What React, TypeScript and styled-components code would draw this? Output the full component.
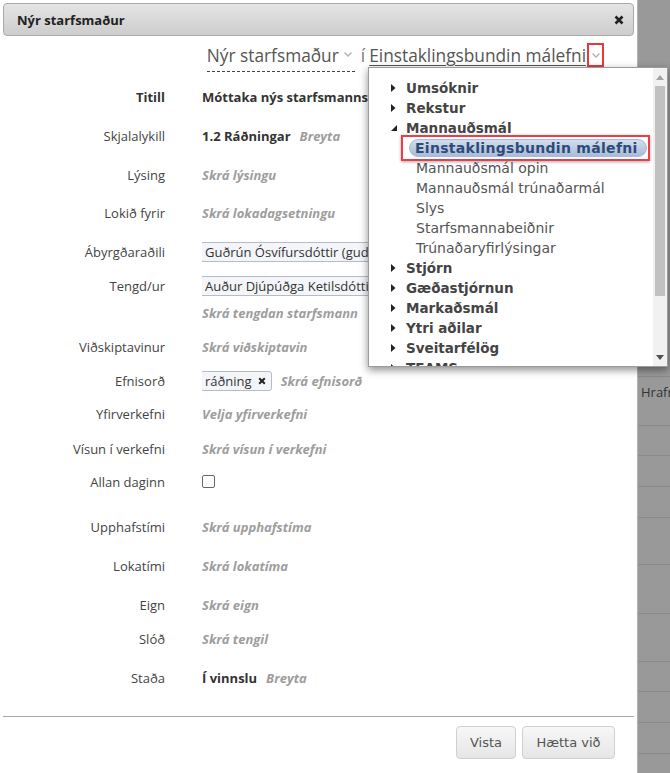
import React from 'react';
import styled, { createGlobalStyle } from 'styled-components';

const GlobalStyle = createGlobalStyle`
  html, body { margin: 0; padding: 0; }
  body {
    font-family: "Open Sans", "Liberation Sans", sans-serif;
    background: #999;
    overflow: hidden;
  }
`;

const Page = styled.div`
  position: relative;
  display: flex;
  height: 773px;
  width: 670px;
  overflow: hidden;
`;

const Dialog = styled.div`
  width: 637px;
  height: 100%;
  background: #fff;
  border-right: 1px solid #b4b4b4;
  display: flex;
  flex-direction: column;
`;

const TitleBar = styled.div`
  margin: 3px 3px 0;
  height: 31px;
  border: 1px solid #aaa;
  border-radius: 4px;
  background: linear-gradient(#e4e4e4, #cdcdcd);
  display: flex;
  align-items: center;
  justify-content: space-between;
  padding: 0 9px 0 13px;
  font-size: 13px;
  font-weight: 700;
  color: #222;
`;

const Crumbs = styled.div`
  height: 40px;
  display: flex;
  align-items: flex-start;
  justify-content: flex-end;
  padding: 8px 33px 0 0;
  box-sizing: border-box;
  font-size: 17.3px;
  color: #555;
  line-height: 24px;
`;

const CrumbPart = styled.span<{ $underline?: boolean }>`
  display: inline-flex;
  align-items: center;
  border-bottom: 1px dashed #444;
  padding-bottom: 3px;
  text-decoration: ${p => (p.$underline ? 'underline' : 'none')};
  text-underline-offset: 3px;
  text-decoration-thickness: 1px;
`;

const CrumbSep = styled.span`
  padding: 0 4px 0 6px;
  color: #777;
`;

const Chevron = styled.span<{ $boxed?: boolean }>`
  display: inline-flex;
  align-items: center;
  justify-content: center;
  width: ${p => (p.$boxed ? '17px' : '14px')};
  height: ${p => (p.$boxed ? '24px' : 'auto')};
  box-sizing: border-box;
  border: ${p => (p.$boxed ? '2px solid #e8383d' : 'none')};
  margin-left: ${p => (p.$boxed ? '1px' : '2px')};
  margin-top: ${p => (p.$boxed ? '-1px' : '0')};
  align-self: ${p => (p.$boxed ? 'auto' : 'flex-start')};
  padding-top: ${p => (p.$boxed ? '0' : '8px')};
`;

const Form = styled.div`
  flex: 1;
  padding-top: 11px;
  font-size: 13px;
  line-height: 20px;
`;

const Row = styled.div<{ $h: number }>`
  display: grid;
  grid-template-columns: 165px 1fr;
  column-gap: 37px;
  height: ${p => p.$h}px;
  white-space: nowrap;
`;

const Label = styled.div`
  text-align: right;
  color: #444;
`;

const Value = styled.div`
  display: flex;
  flex-direction: column;
  gap: 7px;
  overflow: hidden;
`;

const Line = styled.div`
  display: flex;
  align-items: center;
  gap: 9px;
`;

const Strong = styled.span`
  font-weight: 700;
  color: #333;
`;

const Hint = styled.span`
  font-weight: 700;
  font-style: italic;
  color: #9d9d9d;
`;

const Tag = styled.span`
  display: inline-flex;
  align-items: center;
  gap: 6px;
  height: 20px;
  box-sizing: border-box;
  padding: 0 5px 0 4px;
  margin-left: -2px;
  border: 1px solid #b4bccb;
  border-radius: 3px;
  background: #f3f5f9;
  color: #333;
  line-height: 18px;
`;

const Check = styled.span`
  display: inline-block;
  width: 11px;
  height: 11px;
  margin-top: 3px;
  border: 1px solid #666;
  border-radius: 2px;
  background: #fff;
`;

const Footer = styled.div`
  margin: 0 3px;
  border-top: 1px solid #a9a9a9;
  padding: 9px 19px 14px;
  display: flex;
  justify-content: flex-end;
  gap: 6px;
`;

const Button = styled.button<{ $w: number }>`
  width: ${p => p.$w}px;
  height: 33px;
  border: 1px solid #cfcfcf;
  border-radius: 4px;
  background: linear-gradient(#f7f7f7, #e6e6e6);
  font-family: "DejaVu Sans", Verdana, sans-serif;
  font-size: 13px;
  color: #555;
  padding: 0;
`;

const Backdrop = styled.div`
  flex: 1;
  display: flex;
  flex-direction: column;
  overflow: hidden;
  background: #999;
`;

const BackdropTop = styled.div`
  height: 379px;
`;

const BackRow = styled.div<{ $h: number }>`
  height: ${p => p.$h}px;
  border-top: 1px solid #8a8a8a;
  box-sizing: border-box;
  padding: 6px 0 0 3px;
  font-size: 13px;
  color: #333;
  white-space: nowrap;
`;

const Menu = styled.div`
  position: absolute;
  left: 368px;
  top: 67px;
  width: 300px;
  height: 300px;
  box-sizing: border-box;
  background: #fff;
  border: 1px solid #9c9c9c;
  box-shadow: 0 3px 8px rgba(0, 0, 0, 0.45);
  display: flex;
  overflow: hidden;
`;

const Tree = styled.div`
  flex: 1;
  padding-top: 10px;
  font-family: "DejaVu Sans", Verdana, sans-serif;
  font-size: 14px;
  line-height: 20px;
  white-space: nowrap;
  overflow: hidden;
`;

const Node = styled.div<{ $child?: boolean }>`
  display: flex;
  align-items: center;
  height: 20px;
  padding-left: ${p => (p.$child ? '47px' : '22px')};
  font-size: ${p => (p.$child ? '14px' : '13.5px')};
  font-weight: ${p => (p.$child ? 400 : 700)};
  color: ${p => (p.$child ? '#555' : '#444')};
`;

const Toggle = styled.span`
  display: inline-flex;
  width: 15px;
  align-items: center;
`;

const Picked = styled.div`
  display: flex;
  align-items: center;
  height: 22px;
  margin: -3px 3px -3px 32px;
  border: 2px solid #e8404a;
  box-shadow: 0 1px 3px rgba(0, 0, 0, 0.35);
  padding: 0 1px 0 6px;
  position: relative;
`;

const Pill = styled.span`
  flex: 1;
  height: 16px;
  line-height: 16px;
  border-radius: 9px;
  padding-left: 5px;
  background: linear-gradient(#d3ddec, #a9bcd9);
  border: 1px solid #a9bad4;
  font-weight: 700;
  letter-spacing: 0.3px;
  color: #2d4b7a;
  overflow: hidden;
`;

const Scrollbar = styled.div`
  width: 14px;
  background: #f1f1f1;
  display: flex;
  flex-direction: column;
  align-items: center;
`;

const ScrollArrow = styled.div`
  height: 18px;
  display: flex;
  align-items: center;
  justify-content: center;
`;

const Thumb = styled.div`
  width: 10px;
  height: 210px;
  background: #c1c1c1;
`;

const ScrollGap = styled.div`
  flex: 1;
`;

const Close = () => (
  <svg width="10" height="10" viewBox="0 0 10 10">
    <path d="M1.5 1.5 L8.5 8.5 M8.5 1.5 L1.5 8.5" stroke="#222" strokeWidth="2.6" />
  </svg>
);

const SmallX = () => (
  <svg width="8" height="8" viewBox="0 0 8 8">
    <path d="M1.2 1.2 L6.8 6.8 M6.8 1.2 L1.2 6.8" stroke="#222" strokeWidth="2" />
  </svg>
);

const Vee = () => (
  <svg width="8" height="5" viewBox="0 0 8 5">
    <path d="M0.5 0.5 L4 4 L7.5 0.5" fill="none" stroke="#b0b0b0" strokeWidth="1.3" />
  </svg>
);

const Closed = () => (
  <svg width="5" height="8" viewBox="0 0 5 8">
    <path d="M0 0 L4.5 4 L0 8 Z" fill="#222" />
  </svg>
);

const Open = () => (
  <svg width="6" height="6" viewBox="0 0 6 6">
    <path d="M6 0 L6 6 L0 6 Z" fill="#222" />
  </svg>
);

const Arrow = ({ up }: { up?: boolean }) => (
  <svg width="8" height="5" viewBox="0 0 8 5">
    <path d={up ? 'M0 5 L4 0 L8 5 Z' : 'M0 0 L4 5 L8 0 Z'} fill={up ? '#a3a3a3' : '#505050'} />
  </svg>
);

const before = ['Umsóknir', 'Rekstur'];
const children = ['Mannauðsmál opin', 'Mannauðsmál trúnaðarmál', 'Slys', 'Starfsmannabeiðnir', 'Trúnaðaryfirlýsingar'];
const after = ['Stjórn', 'Gæðastjórnun', 'Markaðsmál', 'Ytri aðilar', 'Sveitarfélög', 'TEAMS'];
const backRows = [49, 30, 31, 31, 48, 49, 48, 31, 31, 31, 20];

export default function App() {
  return (
    <>
      <GlobalStyle />
      <Page>
        <Dialog>
          <TitleBar>
            <span>Nýr starfsmaður</span>
            <Close />
          </TitleBar>

          <Crumbs>
            <CrumbPart>
              Nýr starfsmaður
              <Chevron><Vee /></Chevron>
            </CrumbPart>
            <CrumbSep>í</CrumbSep>
            <CrumbPart $underline>Einstaklingsbundin málefni</CrumbPart>
            <Chevron $boxed><Vee /></Chevron>
          </Crumbs>

          <Form>
            <Row $h={39}>
              <Label><Strong>Titill</Strong></Label>
              <Value><Strong>Móttaka nýs starfsmanns</Strong></Value>
            </Row>
            <Row $h={39}>
              <Label>Skjalalykill</Label>
              <Value><Line><Strong>1.2 Ráðningar</Strong><Hint>Breyta</Hint></Line></Value>
            </Row>
            <Row $h={38}>
              <Label>Lýsing</Label>
              <Value><Hint>Skrá lýsingu</Hint></Value>
            </Row>
            <Row $h={39}>
              <Label>Lokið fyrir</Label>
              <Value><Hint>Skrá lokadagsetningu</Hint></Value>
            </Row>
            <Row $h={34}>
              <Label>Ábyrgðaraðili</Label>
              <Value><Line><Tag>Guðrún Ósvífursdóttir (gudrun@kerfi.is)</Tag></Line></Value>
            </Row>
            <Row $h={61}>
              <Label>Tengd/ur</Label>
              <Value>
                <Line><Tag>Auður Djúpúðga Ketilsdóttir (audur@kerfi.is)</Tag></Line>
                <Hint>Skrá tengdan starfsmann</Hint>
              </Value>
            </Row>
            <Row $h={34}>
              <Label>Viðskiptavinur</Label>
              <Value><Hint>Skrá viðskiptavin</Hint></Value>
            </Row>
            <Row $h={33}>
              <Label>Efnisorð</Label>
              <Value>
                <Line>
                  <Tag>ráðning <SmallX /></Tag>
                  <Hint>Skrá efnisorð</Hint>
                </Line>
              </Value>
            </Row>
            <Row $h={35}>
              <Label>Yfirverkefni</Label>
              <Value><Hint>Velja yfirverkefni</Hint></Value>
            </Row>
            <Row $h={33}>
              <Label>Vísun í verkefni</Label>
              <Value><Hint>Skrá vísun í verkefni</Hint></Value>
            </Row>
            <Row $h={45}>
              <Label>Allan daginn</Label>
              <Value><Line><Check /></Line></Value>
            </Row>
            <Row $h={39}>
              <Label>Upphafstími</Label>
              <Value><Hint>Skrá upphafstíma</Hint></Value>
            </Row>
            <Row $h={39}>
              <Label>Lokatími</Label>
              <Value><Hint>Skrá lokatíma</Hint></Value>
            </Row>
            <Row $h={34}>
              <Label>Eign</Label>
              <Value><Hint>Skrá eign</Hint></Value>
            </Row>
            <Row $h={39}>
              <Label>Slóð</Label>
              <Value><Hint>Skrá tengil</Hint></Value>
            </Row>
            <Row $h={39}>
              <Label>Staða</Label>
              <Value><Line><Strong>Í vinnslu</Strong><Hint>Breyta</Hint></Line></Value>
            </Row>
          </Form>

          <Footer>
            <Button $w={60}>Vista</Button>
            <Button $w={93}>Hætta við</Button>
          </Footer>
        </Dialog>

        <Backdrop>
          <BackdropTop />
          {backRows.map((h, i) => (
            <BackRow key={i} $h={h}>{i === 0 ? 'Hrafnhildur' : ''}</BackRow>
          ))}
        </Backdrop>

        <Menu>
          <Tree>
            {before.map(t => (
              <Node key={t}><Toggle><Closed /></Toggle>{t}</Node>
            ))}
            <Node><Toggle><Open /></Toggle>Mannauðsmál</Node>
            <Picked><Pill>Einstaklingsbundin málefni</Pill></Picked>
            {children.map(t => (
              <Node key={t} $child>{t}</Node>
            ))}
            {after.map(t => (
              <Node key={t}><Toggle><Closed /></Toggle>{t}</Node>
            ))}
          </Tree>
          <Scrollbar>
            <ScrollArrow><Arrow up /></ScrollArrow>
            <Thumb />
            <ScrollGap />
            <ScrollArrow><Arrow /></ScrollArrow>
          </Scrollbar>
        </Menu>
      </Page>
    </>
  );
}
